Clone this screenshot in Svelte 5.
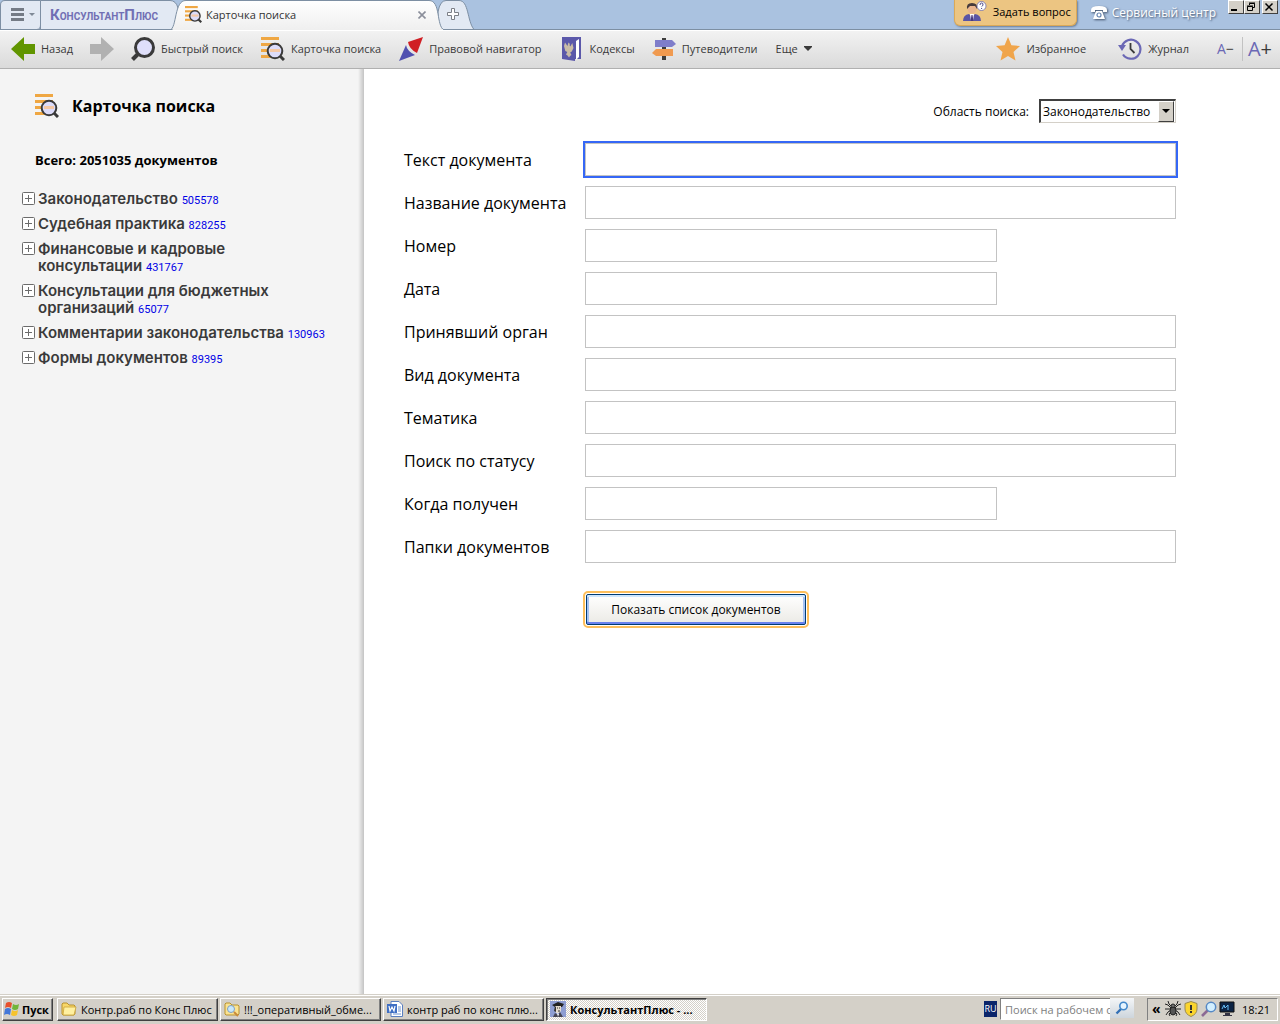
<script>
    let scope = "Законодательство";

    const sections = [
        { title: "Законодательство", count: 505578 },
        { title: "Судебная практика", count: 828255 },
        { title: "Финансовые и кадровые консультации", count: 431767 },
        { title: "Консультации для бюджетных организаций", count: 65077 },
        { title: "Комментарии законодательства", count: 130963 },
        { title: "Формы документов", count: 89395 },
    ];

    const fields = [
        { id: "text", label: "Текст документа", active: true },
        { id: "name", label: "Название документа" },
        { id: "number", label: "Номер", short: true },
        { id: "date", label: "Дата", short: true },
        { id: "organ", label: "Принявший орган" },
        { id: "kind", label: "Вид документа" },
        { id: "theme", label: "Тематика" },
        { id: "status", label: "Поиск по статусу" },
        { id: "received", label: "Когда получен", short: true },
        { id: "folders", label: "Папки документов" },
    ];
</script>

{#snippet cardIcon(size)}
    <svg width={size} height={size} viewBox="0 0 24 24">
        <g fill="#efa743">
            <rect width="18" height="3" />
            <rect y="6" width="18" height="3" />
            <rect y="12" width="18" height="3" />
            <rect y="18" width="12" height="3" />
        </g>
        <circle cx="14" cy="14" r="7.3" fill="#dcdcfa" stroke="#3a3a3a" stroke-width="2" />
        <path d="M9 12h10v3H9z" fill="#f5c9a6" />
        <path d="M19 19l4 4" stroke="#3a3a3a" stroke-width="3" />
    </svg>
{/snippet}

<div class="page">
    <header class="tabs">
        <svg class="tabs-shape" width="480" height="30" viewBox="0 0 480 30">
            <defs>
                <linearGradient id="tab" x2="0" y2="1">
                    <stop stop-color="#fff" />
                    <stop offset="1" stop-color="#efefef" />
                </linearGradient>
            </defs>
            <g fill="#e2e9f3" stroke="#7d8fa3">
                <path d="M36.500 29.500H.5V5Q.5.5 5 .5H40.500V25Q40.500 29.500 36.500 29.500z" />
                <path d="M40.500 29.500V.5H170Q176 .5 178 8L182 29.500z" />
                <path d="M438 12Q440 .5 446 .5H459C469 .5 467 21 474 29.500H438z" />
            </g>
            <path d="M170 30C177 28 174 0 186 0.500H429C441 .5 436 26 444 30z" fill="url(#tab)" stroke="#7d8fa3" />
            <path d="M0 29.500H172M444 29.500H480" stroke="#7d8fa3" />
            <path d="M173 29.500H443" stroke="#efefef" />
        </svg>
        <button class="menu" aria-label="Меню">
            <svg width="26" height="14" viewBox="0 0 26 14">
                <path d="M0 0h13v3H0zM0 5h13v3H0zM0 10h13v3H0z" fill="#747b85" />
                <path d="M18 5h6l-3 3z" fill="#7f8996" />
            </svg>
        </button>
        <a class="logo" href="#home">К<small>ОНСУЛЬТАНТ</small>П<small>ЛЮС</small></a>
        <a class="tab" href="#card">
            {@render cardIcon(17)}
            <span>Карточка поиска</span>
        </a>
        <button class="close" aria-label="Закрыть">
            <svg width="8" height="8" viewBox="0 0 8 8">
                <path d="M.5.5l7 7M7.500.5l-7 7" stroke="#8b8f9b" stroke-width="1.600" />
            </svg>
        </button>
        <button class="plus" aria-label="Новая вкладка">
            <svg width="13" height="13" viewBox="0 0 13 13">
                <path d="M4.500.5h3v4h4v3h-4v4h-3v-4h-4v-3h4z" fill="#fff" stroke="#7b7f86" />
            </svg>
        </button>
        <button class="ask">
            <svg width="24" height="21" viewBox="0 0 24 21">
                <path d="M0 20q0-6 6-7l3 3 3-3q6 1 6 7z" fill="#5a55a5" />
                <path d="M7 13h4l-1 7H8z" fill="#fff" />
                <path d="M8.500 14h1l1 6h-3z" fill="#4a3a80" />
                <circle cx="9" cy="8" r="4.500" fill="#e9b58e" />
                <path d="M4 8q-1-6 5-6t5 6l-2-3H7z" fill="#463b3b" />
                <circle cx="18.500" cy="5" r="4.500" fill="#fff" stroke="#6d6aa8" stroke-width=".8" />
                <path d="M17 4q0-2 1.600-2t1.400 2q-.2.8-1.400 1.600M18.600 7v1" fill="none" stroke="#4a4788" />
            </svg>
            <span>Задать вопрос</span>
        </button>
        <a class="service" href="#service">
            <svg width="16" height="14" viewBox="0 0 16 14">
                <path d="M0 4q0-4 8-4t8 4v2h-4V4H4v2H0z" fill="#fff" />
                <path d="M5 5h6l3 8H2z" fill="#fff" />
                <circle cx="8" cy="9" r="2" fill="none" stroke="#6685b1" stroke-width="1.200" />
            </svg>
            <span>Сервисный центр</span>
        </a>
        <div class="window-buttons">
            <button aria-label="Свернуть">
                <svg width="12" height="10" viewBox="0 0 12 10"><path d="M2 7h6v2H2z" /></svg>
            </button>
            <button aria-label="Восстановить">
                <svg width="12" height="10" viewBox="0 0 12 10">
                    <path d="M4.500 3V1.500h5v4H8M4 1h6M2.500 4.500h5v4h-5zM2 4h6" fill="none" stroke="#000" />
                </svg>
            </button>
            <button class="win-close" aria-label="Закрыть окно">
                <svg width="12" height="10" viewBox="0 0 12 10">
                    <path d="M2.500 1.500l7 7M9.500 1.500l-7 7" stroke="#000" stroke-width="1.500" />
                </svg>
            </button>
        </div>
    </header>

    <nav class="toolbar">
        <button class="back">
            <svg width="24" height="24" viewBox="0 0 24 24">
                <path d="M0 12L13 0v7h11v10H13v7z" fill="#619500" />
            </svg>
            Назад
        </button>
        <button class="forward" aria-label="Вперед">
            <svg width="24" height="24" viewBox="0 0 24 24">
                <path d="M24 12L11 0v7H0v10h11v7z" fill="#b1b1b1" />
            </svg>
        </button>
        <button class="quick">
            <svg width="24" height="24" viewBox="0 0 24 24">
                <circle cx="13.500" cy="10.500" r="9" fill="#dfdffa" stroke="#3a3a3a" stroke-width="3" />
                <path d="M6.500 17.500L1.500 22.500" stroke="#3a3a3a" stroke-width="4" />
            </svg>
            Быстрый поиск
        </button>
        <button class="card">
            {@render cardIcon(24)}
            Карточка поиска
        </button>
        <button class="navigator">
            <svg width="24" height="24" viewBox="0 0 24 24">
                <path d="M24 0L9 5q1 7 9 11z" fill="#d01f24" />
                <path d="M0 24L7 8q1 6 9 10z" fill="#5050b0" />
            </svg>
            Правовой навигатор
        </button>
        <button class="codex">
            <svg width="20" height="24" viewBox="0 0 20 24">
                <path d="M0 0h19v22h-6L0 21z" fill="#5b58aa" />
                <path d="M14 4l3-2v18l-3 3z" fill="#fff" />
                <path d="M0 1l13 3v20L0 22z" fill="#5b58aa" />
                <path d="M6 7l.5-1.500L8 7l-.5 1 .8 1.500 2-3.500 1.200 5-1.700 3.500-1.600 1 1.300 2.500-1.500 1-1 1.500-1.500-2-1.500-1 1.300-2.500-2-1-1.300-5 1-3.500 2.500 3.500z" fill="#c9bca7" />
            </svg>
            Кодексы
        </button>
        <button class="guides">
            <svg width="24" height="22" viewBox="0 0 24 22">
                <path d="M10 0h4v22h-4z" fill="#3d3d3d" />
                <path d="M3 2h17l4 4-4 3H3z" fill="#7f7dca" />
                <path d="M21 11H4l-4 4 4 3h17z" fill="#f09a50" />
            </svg>
            Путеводители
        </button>
        <button class="more">
            Еще
            <svg width="8" height="5" viewBox="0 0 8 5"><path d="M0 0h8v1L4 5 0 1z" fill="#3a3a3a" /></svg>
        </button>
        <button class="favorites">
            <svg width="24" height="24" viewBox="0 0 24 24">
                <path d="M12 0l3.400 8.300L24 9l-6.500 6 2 8.500L12 19l-7.500 4.500 2-8.500L0 9l8.600-.7z" fill="#f0a54b" />
            </svg>
            Избранное
        </button>
        <button class="journal">
            <svg width="24" height="24" viewBox="0 0 24 24" fill="none">
                <path d="M4 9A9.500 9.500 0 1 1 5 17.500" stroke="#6b68b5" stroke-width="2.200" />
                <path d="M0 8h8l-4 6z" fill="#6b68b5" />
                <path d="M12.500 6v6l4 4" stroke="#3a3a3a" stroke-width="1.800" />
            </svg>
            Журнал
        </button>
        <button class="smaller">A<span>−</span></button>
        <button class="larger">A<span>+</span></button>
    </nav>

    <div class="content">
        <aside>
            <h1>
                {@render cardIcon(24)}
                Карточка поиска
            </h1>
            <p class="total">Всего: 2051035 документов</p>
            <ul>
                {#each sections as section}
                    <li>
                        <button class="expand" aria-label="Развернуть: {section.title}">
                            <svg width="13" height="13" viewBox="0 0 13 13">
                                <rect x=".5" y=".5" width="12" height="12" rx="1" fill="#fff" stroke="#6b6b6b" />
                                <path d="M3 6.500h7M6.500 3v7" stroke="#6b6b6b" />
                            </svg>
                        </button>
                        <div>
                            {section.title}
                            <a href="#list">{section.count}</a>
                        </div>
                    </li>
                {/each}
            </ul>
        </aside>

        <main>
            <form on:submit|preventDefault>
                <div class="scope">
                    <label for="scope">Область поиска:</label>
                    <span class="select">
                        <select id="scope" bind:value={scope}>
                            <option>Законодательство</option>
                            <option>Судебная практика</option>
                        </select>
                        <i></i>
                    </span>
                </div>
                {#each fields as field}
                    <div class="row">
                        <label for={field.id}>{field.label}</label>
                        <input
                            id={field.id}
                            type="text"
                            class:short={field.short}
                            class:active={field.active}
                        />
                    </div>
                {/each}
                <button class="submit" type="submit">Показать список документов</button>
            </form>
        </main>
    </div>

    <footer>
        <button class="start">
            <svg width="16" height="16" viewBox="0 0 16 16">
                <path d="M2 2q3-2 6 0L7 7q-3-2-6 0z" fill="#e8502c" />
                <path d="M9 3q3 2 6 0l-1 5q-3 2-6 0z" fill="#72b539" />
                <path d="M1 8q3-2 6 0l-1 6q-3-2-6 0z" fill="#4478d8" />
                <path d="M8 9q3 2 6 0l-1 5q-3 2-6 0z" fill="#f6c32d" />
            </svg>
            Пуск
        </button>
        <button class="task">
            <svg width="16" height="16" viewBox="0 0 16 16">
                <path d="M1 3l1-1h4l2 2h5l1 1v8l-1 1H2l-1-1z" fill="#f8d768" stroke="#b8922e" />
                <path d="M3 6h12l-2 8H2z" fill="#fff0a0" stroke="#c9a238" stroke-width=".8" />
            </svg>
            <span>Контр.раб по Конс Плюс</span>
        </button>
        <button class="task">
            <svg width="16" height="16" viewBox="0 0 16 16">
                <path d="M1 3l1-1h4l2 2h6l1 1v8l-1 1H2l-1-1z" fill="#fbe391" stroke="#b8922e" />
                <circle cx="7" cy="8" r="3.500" fill="#c8e8fb" stroke="#7f9fc0" />
                <path d="M10 11l4 4" stroke="#c98a3a" stroke-width="2" />
            </svg>
            <span>!!!_оперативный_обме...</span>
        </button>
        <button class="task">
            <svg width="16" height="16" viewBox="0 0 16 16">
                <path d="M4 .5h8l3.500 3.500v11.500H4z" fill="#fff" stroke="#5a7fc0" />
                <path d="M11 6h3M11 8h3M11 10h3M6 13h8" stroke="#6f93d0" />
                <rect y="3" width="10" height="9" fill="#3f6fc4" />
                <path d="M2 5l1 5 2-4 2 4 1-5" fill="none" stroke="#fff" stroke-width="1.200" />
            </svg>
            <span>контр раб по конс плю...</span>
        </button>
        <button class="task current">
            <svg width="16" height="16" viewBox="0 0 16 16">
                <path d="M0 0h16v16H0z" fill="#8e9ed2" />
                <path d="M2 4l6-3 6 2-2 3H5z" fill="#222" />
                <path d="M5 5h6v5l-2 2H6L5 9z" fill="#e4dccd" />
                <path d="M5 5l-1 5 2 1V6z" fill="#333" />
                <path d="M7 7h1M9 7h1M8 10h2" stroke="#333" />
                <path d="M3 16l2-4 3 2 2-3 3 5z" fill="#454553" />
                <path d="M7 12l2 1-1 3z" fill="#fff" />
            </svg>
            <span>КонсультантПлюс - ...</span>
        </button>
        <span class="lang">RU</span>
        <form class="desk-search" on:submit|preventDefault>
            <input type="text" aria-label="Поиск" placeholder="Поиск на рабочем столе" />
            <button aria-label="Найти">
                <svg width="14" height="14" viewBox="0 0 14 14">
                    <path d="M1.500 12.500L6 8" stroke="#316fb5" stroke-width="2.400" />
                    <circle cx="8.500" cy="5" r="3.700" fill="#e5f4ff" stroke="#4388ca" stroke-width="1.600" />
                </svg>
            </button>
        </form>
        <div class="tray">
            <span class="chevrons">«</span>
            <svg width="16" height="16" viewBox="0 0 16 16" fill="none" stroke="#222">
                <path d="M0 3l3 1 3 3M16 3l-3 1-3 3M0 8h16M1 14l2-3 3-2M15 14l-2-3-3-2M3 0l1 3 2 2M13 0l-1 3-2 2M5 15l-1-2 2-2M11 15l1-2-2-2" />
                <circle cx="8" cy="5" r="2" fill="#777" />
                <ellipse cx="8" cy="10" rx="3" ry="4" fill="#555" />
            </svg>
            <svg width="16" height="16" viewBox="0 0 16 16">
                <path d="M8 .5l6 2V8q0 5-6 7.500Q2 13 2 8V2.500z" fill="#fbd52e" stroke="#9a8a50" />
                <path d="M7 4h2v5H7zM7 10h2v2H7z" fill="#333" />
            </svg>
            <svg width="16" height="16" viewBox="0 0 16 16">
                <path d="M1 15l6-6" stroke="#8c6a94" stroke-width="2.600" />
                <circle cx="10" cy="6" r="4.700" fill="#d2efff" stroke="#5689c5" stroke-width="1.500" />
            </svg>
            <svg width="16" height="16" viewBox="0 0 16 16">
                <path d="M1 1h14v10H1z" fill="#0c2344" stroke="#111" />
                <path d="M3 8l2-4 1 3 3-3v5" fill="none" stroke="#67bdf5" />
                <path d="M6 12h5v2h2v1H4v-1h2z" fill="#334" />
            </svg>
            <time>18:21</time>
        </div>
    </footer>
</div>

<style>
    :global(body) {
        margin: 0;
        background: #fff;
    }
    .page {
        display: flex;
        flex-direction: column;
        min-height: 100vh;
        font-family: "Open Sans", "Noto Sans", sans-serif;
        font-size: 11px;
        color: #000;
    }
    button,
    input,
    select {
        font: inherit;
        color: inherit;
        margin: 0;
        padding: 0;
        box-sizing: border-box;
    }
    button {
        border: none;
        background: none;
    }
    a {
        color: inherit;
        text-decoration: none;
    }
    svg {
        flex: none;
        display: block;
    }

    /* tabs */
    .tabs {
        position: relative;
        display: flex;
        align-items: center;
        height: 30px;
        box-sizing: border-box;
        background: #aac2e0;
        border-bottom: 1px solid #7d8fa3;
        white-space: nowrap;
    }
    .tabs > * {
        position: relative;
    }
    .tabs-shape {
        position: absolute;
        left: 0;
        top: 0;
    }
    .menu {
        width: 40px;
        padding-left: 11px;
    }
    .logo {
        width: 135px;
        padding-left: 10px;
        box-sizing: border-box;
        font-family: Roboto, sans-serif;
        font-size: 15px;
        font-weight: 700;
        color: #716fb4;
    }
    .logo small {
        font-size: 10px;
    }
    .tab {
        display: flex;
        align-items: center;
        gap: 4px;
        flex: 0 0 232px;
        padding-left: 10px;
        box-sizing: border-box;
        color: #333;
    }
    .close {
        width: 30px;
        padding-left: 11px;
    }
    .plus {
        width: 36px;
        padding-left: 10px;
    }
    .ask {
        display: flex;
        align-items: center;
        align-self: flex-start;
        gap: 6px;
        height: 26px;
        margin-left: auto;
        padding: 0 5px 2px 8px;
        background: #ecc582;
        border: 1px solid #dba957;
        border-top: none;
        border-radius: 0 0 6px 6px;
        box-shadow: 1px 1px 2px #6c7f99;
    }
    .service {
        display: flex;
        align-items: center;
        gap: 5px;
        margin: 0 12px 4px 14px;
        font-size: 12px;
        color: #fff;
        text-shadow: 1px 1px 2px #41526b;
    }
    .service svg {
        filter: drop-shadow(1px 1px 1px #41526b);
    }
    .window-buttons {
        display: flex;
        align-self: flex-start;
        padding-right: 2px;
    }
    .window-buttons button {
        width: 16px;
        height: 14px;
        background: #d4d0c8;
        border: 1px solid #404040;
        border-top-color: #fff;
        border-left-color: #fff;
    }
    .window-buttons .win-close {
        margin-left: 2px;
    }

    /* toolbar */
    .toolbar {
        display: flex;
        align-items: center;
        height: 39px;
        box-sizing: border-box;
        padding: 0 8px 2px 11px;
        background: linear-gradient(#f2f2f2, #dadada);
        border-top: 1px solid #fff;
        border-bottom: 1px solid #b0b0b0;
        white-space: nowrap;
    }
    .toolbar button {
        display: flex;
        align-items: center;
        gap: 6px;
        margin-right: 18px;
        color: #3a3a3a;
    }
    .toolbar .codex {
        gap: 8px;
    }
    .toolbar .back,
    .toolbar .forward,
    .toolbar .codex {
        margin-right: 17px;
    }
    .toolbar .navigator {
        margin-right: 20px;
    }
    .toolbar .favorites {
        margin-left: auto;
        margin-right: 32px;
    }
    .toolbar .journal {
        margin-right: 28px;
    }
    .toolbar .smaller,
    .toolbar .larger {
        gap: 0;
        margin-right: 0;
        color: #6b68b5;
    }
    .toolbar .smaller {
        height: 24px;
        padding-right: 8px;
        border-right: 1px solid #c2c2c2;
        font-size: 14px;
    }
    .toolbar .larger {
        padding-left: 5px;
        font-size: 20px;
    }
    .toolbar .smaller span,
    .toolbar .larger span {
        color: #3a3a3a;
    }

    /* sidebar */
    .content {
        display: flex;
        flex: 1;
    }
    aside {
        flex: 0 0 364px;
        box-sizing: border-box;
        padding: 25px 36px 0 22px;
        background: linear-gradient(to left, #c4c4c4, #f4f4f4 6px);
    }
    h1 {
        display: flex;
        align-items: center;
        gap: 13px;
        height: 24px;
        margin: 0 0 32px 13px;
        font-size: 16px;
    }
    .total {
        margin: 0 0 20px 13px;
        font-size: 13px;
        font-weight: bold;
        line-height: 20px;
    }
    ul {
        margin: 0;
        padding: 0;
        list-style: none;
    }
    li {
        display: flex;
        align-items: flex-start;
        gap: 3px;
        margin-bottom: 8px;
        font-family: Inter, "Liberation Sans", sans-serif;
        font-size: 15px;
        font-weight: 600;
        line-height: 17px;
        color: #3a3a3a;
    }
    .expand {
        padding-top: 2px;
    }
    li a {
        font-family: Roboto, sans-serif;
        font-size: 11px;
        font-weight: 400;
        line-height: 12px;
        color: #0000e6;
    }

    /* search form */
    main {
        flex: 1;
        padding: 30px 104px 0 40px;
    }
    .scope {
        display: flex;
        justify-content: flex-end;
        align-items: center;
        gap: 10px;
        margin-bottom: 20px;
        font-size: 12px;
    }
    .select {
        position: relative;
    }
    select {
        display: block;
        width: 137px;
        height: 24px;
        padding-left: 2px;
        appearance: none;
        background: #fff;
        border: 2px solid #404040;
        border-right: 1px solid #d4d0c8;
        border-bottom: 1px solid #d4d0c8;
        border-radius: 0;
    }
    .select i {
        position: absolute;
        top: 2px;
        right: 2px;
        width: 14px;
        height: 19px;
        background: #d4d0c8;
        border: 1px solid #404040;
        border-top-color: #fff;
        border-left-color: #fff;
        pointer-events: none;
    }
    .select i::before {
        content: "";
        position: absolute;
        left: 3px;
        top: 7px;
        border: 4px solid transparent;
        border-top-color: #000;
        border-bottom: none;
    }
    .row {
        display: grid;
        grid-template-columns: 181px 1fr;
        align-items: center;
        margin-bottom: 10px;
        font-size: 16px;
        line-height: 20px;
    }
    .row input {
        width: 100%;
        height: 33px;
        padding: 0 6px;
        background: #fff;
        border: 1px solid #c3c3c3;
    }
    .row input.short {
        max-width: 412px;
    }
    .row input.active {
        outline: 2px solid #3567f6;
    }
    .submit {
        display: block;
        width: 220px;
        height: 31px;
        margin: 31px 0 0 182px;
        background: linear-gradient(#fff, #ebeae5);
        border: 1px solid #003c74;
        border-radius: 2px;
        outline: 2px solid #fdbf5c;
        outline-offset: 1px;
        box-shadow: inset 0 2px #cee7ff, inset 0 -2px #6982ee, inset 2px 0 #a6c2f2, inset -2px 0 #a6c2f2;
        font-size: 12px;
    }

    /* taskbar */
    footer {
        display: flex;
        align-items: center;
        height: 30px;
        box-sizing: border-box;
        padding: 2px 2px 3px;
        background: #d4d0c8;
        border-top: 1px solid #d4d0c8;
        box-shadow: inset 0 1px #fff;
        white-space: nowrap;
    }
    .start,
    .task {
        display: flex;
        align-items: center;
        height: 23px;
        border: 1px solid;
        border-color: #fff #404040 #404040 #fff;
        box-shadow: inset -1px -1px #808080;
        background: #d4d0c8;
    }
    .start {
        gap: 2px;
        width: 51px;
        margin-right: 4px;
        padding-left: 1px;
        font-weight: bold;
    }
    .task {
        gap: 4px;
        flex: 0 1 161px;
        margin-right: 2px;
        padding: 0 3px;
    }
    .task span {
        overflow: hidden;
    }
    .task.current {
        border-color: #404040 #fff #fff #404040;
        box-shadow: inset 1px 1px #808080;
        background: repeating-conic-gradient(#fff 0 25%, #d4d0c8 0 50%) 0 0 / 2px 2px;
        font-weight: bold;
    }
    .lang {
        width: 13px;
        margin-left: auto;
        background: #0a246a;
        color: #fff;
        font-size: 9px;
        line-height: 16px;
        text-align: center;
    }
    .desk-search {
        display: flex;
        margin: 0 13px 0 3px;
    }
    .desk-search input {
        width: 110px;
        height: 22px;
        padding: 0 0 0 4px;
        background: #fff;
        border: 1px solid #808080;
        border-right: none;
        border-bottom-color: #fff;
    }
    .desk-search input::placeholder {
        color: #808080;
        opacity: 1;
    }
    .desk-search button {
        width: 24px;
        height: 20px;
        padding-left: 5px;
        background: linear-gradient(#f4f6f8, #cdd5dc);
    }
    .tray {
        display: flex;
        align-items: center;
        gap: 2px;
        width: 131px;
        height: 23px;
        box-sizing: border-box;
        padding: 0 7px 0 4px;
        border: 1px solid;
        border-color: #808080 #fff #fff #808080;
    }
    .chevrons {
        width: 11px;
        font-size: 14px;
        font-weight: bold;
        line-height: 16px;
    }
    time {
        margin-left: auto;
    }
</style>
